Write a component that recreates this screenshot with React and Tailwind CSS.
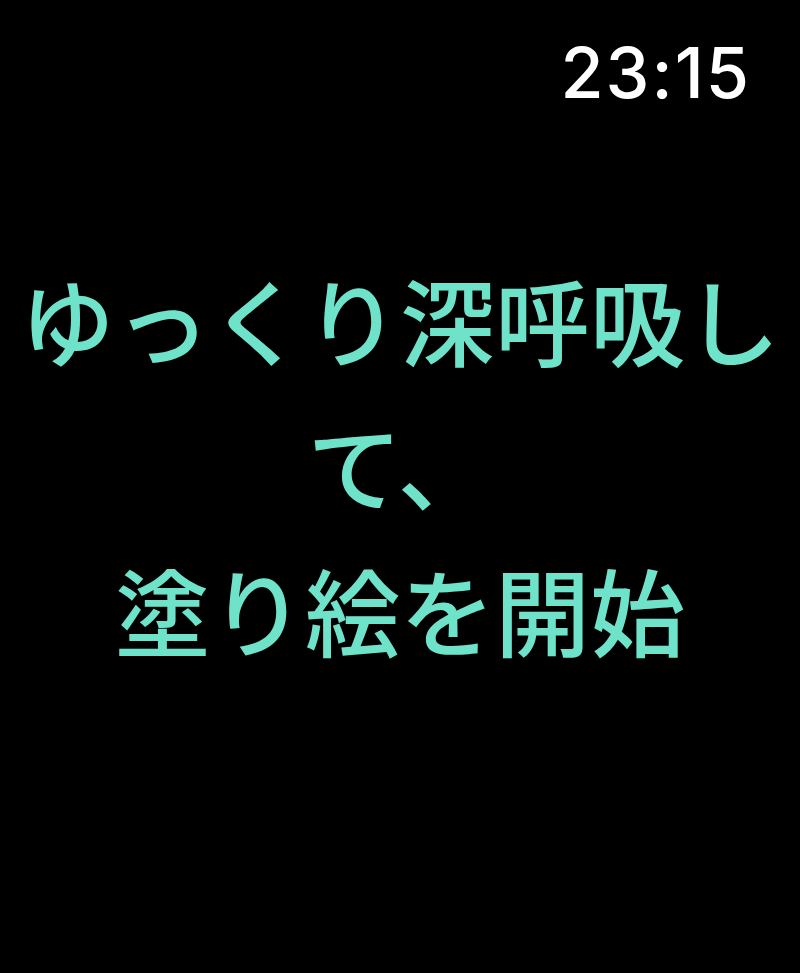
export default function App() {
  return (
    <div className="w-[800px] h-[973px] bg-black flex flex-col overflow-hidden">
      <div className="flex justify-end pr-[49px] pt-[31px]">
        <span className="text-white text-[70px] leading-[84px] font-medium tracking-[2px]" style={{ fontFamily: 'Inter, "Liberation Sans", sans-serif' }}>
          23:15
        </span>
      </div>
      <div className="flex-1 flex items-center justify-center pb-[162px]">
        <p
          className="text-[#6fe3ca] text-[95px] leading-[145px] font-medium text-center"
          style={{ fontFamily: '"Noto Sans CJK JP", "Noto Sans", sans-serif' }}
        >
          ゆっくり深呼吸し
          <br />
          て、
          <br />
          塗り絵を開始
        </p>
      </div>
    </div>
  );
}
